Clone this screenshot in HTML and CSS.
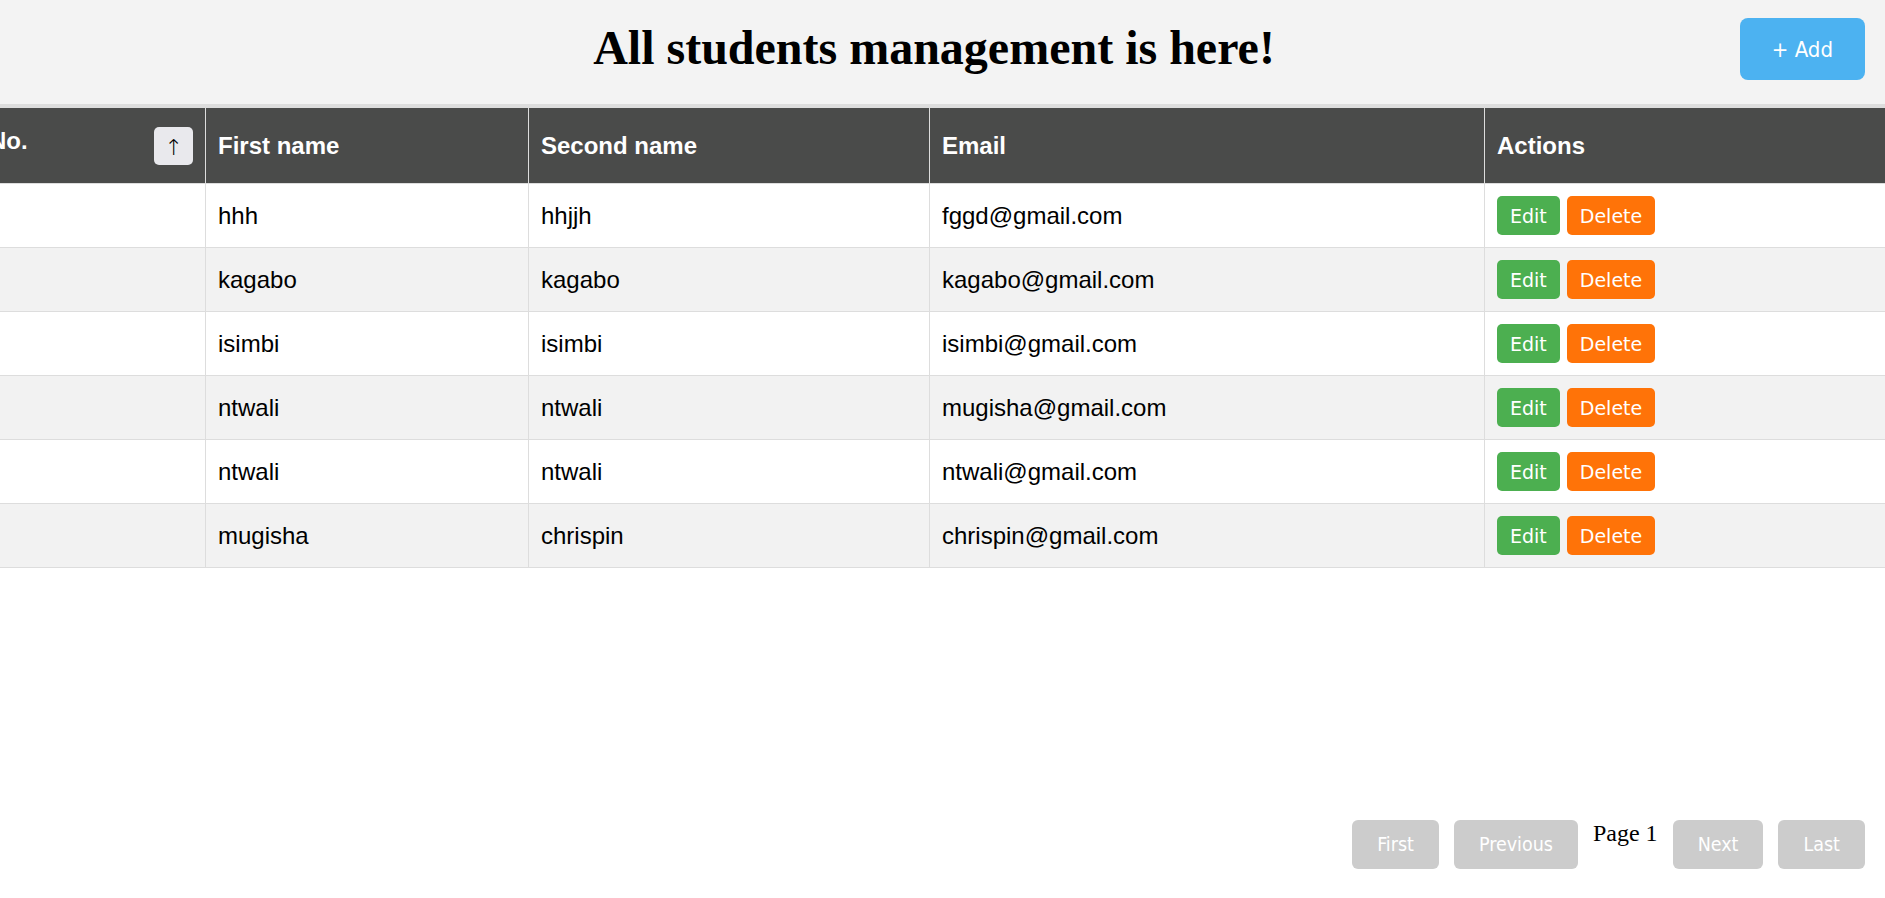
FILE: index.html
```html
<!DOCTYPE html>
<html lang="en">
<head>
<meta charset="utf-8">
<title>Students</title>
<link rel="stylesheet" href="styles.css">
</head>
<body>
<div class="page">
  <header class="topbar">
    <div class="spacer"></div>
    <h1 class="title">All students management is here!</h1>
    <div class="add-wrap"><button class="btn-add">+ Add</button></div>
  </header>

  <div class="table-wrap">
    <table class="students">
      <colgroup>
        <col class="c-no">
        <col class="c-first">
        <col class="c-second">
        <col class="c-email">
        <col class="c-actions">
      </colgroup>
      <thead>
        <tr>
          <th><div class="th-no"><span class="no-label">No.</span><button class="sort">↑</button></div></th>
          <th>First name</th>
          <th>Second name</th>
          <th>Email</th>
          <th>Actions</th>
        </tr>
      </thead>
      <tbody>
        <tr>
          <td></td><td>hhh</td><td>hhjjh</td><td>fggd@gmail.com</td>
          <td><div class="actions"><button class="btn-edit">Edit</button><button class="btn-delete">Delete</button></div></td>
        </tr>
        <tr>
          <td></td><td>kagabo</td><td>kagabo</td><td>kagabo@gmail.com</td>
          <td><div class="actions"><button class="btn-edit">Edit</button><button class="btn-delete">Delete</button></div></td>
        </tr>
        <tr>
          <td></td><td>isimbi</td><td>isimbi</td><td>isimbi@gmail.com</td>
          <td><div class="actions"><button class="btn-edit">Edit</button><button class="btn-delete">Delete</button></div></td>
        </tr>
        <tr>
          <td></td><td>ntwali</td><td>ntwali</td><td>mugisha@gmail.com</td>
          <td><div class="actions"><button class="btn-edit">Edit</button><button class="btn-delete">Delete</button></div></td>
        </tr>
        <tr>
          <td></td><td>ntwali</td><td>ntwali</td><td>ntwali@gmail.com</td>
          <td><div class="actions"><button class="btn-edit">Edit</button><button class="btn-delete">Delete</button></div></td>
        </tr>
        <tr>
          <td></td><td>mugisha</td><td>chrispin</td><td>chrispin@gmail.com</td>
          <td><div class="actions"><button class="btn-edit">Edit</button><button class="btn-delete">Delete</button></div></td>
        </tr>
      </tbody>
    </table>
  </div>

  <nav class="pager">
    <button class="pg-btn">First</button>
    <button class="pg-btn">Previous</button>
    <span class="pg-label">Page 1</span>
    <button class="pg-btn">Next</button>
    <button class="pg-btn">Last</button>
  </nav>
</div>
</body>
</html>
```

FILE: styles.css
```css
html, body {
  margin: 0;
  padding: 0;
  background: #ffffff;
}

.page {
  display: flex;
  flex-direction: column;
  min-height: 100vh;
  overflow: hidden;
}

/* ---------- top bar ---------- */
.topbar {
  height: 107px;
  box-sizing: border-box;
  padding: 0 20px 6px 3px;
  background: #f3f3f3;
  border-bottom: 3px solid #dddddd;
  display: grid;
  grid-template-columns: 1fr auto 1fr;
  align-items: center;
}

.title {
  margin: 0 0 4px;
  font-family: "Liberation Serif", "Times New Roman", serif;
  font-size: 48px;
  font-weight: bold;
  color: #000;
  white-space: nowrap;
}

.add-wrap {
  display: flex;
  justify-content: flex-end;
}

.btn-add {
  height: 62px;
  padding: 0 32px;
  border: none;
  border-radius: 8px;
  background: #4cb2f1;
  color: #ffffff;
  font-family: "DejaVu Sans Condensed", "DejaVu Sans", sans-serif;
  font-size: 22px;
  cursor: pointer;
}

/* ---------- table ---------- */
.table-wrap {
  overflow: hidden;
}

.students {
  margin-left: -24px;
  width: calc(100% + 44px);
  table-layout: fixed;
  border-collapse: collapse;
  font-family: "Liberation Sans", Arial, sans-serif;
  font-size: 24px;
  color: #000;
}

.c-no { width: 229px; }
.c-first { width: 323px; }
.c-second { width: 401px; }
.c-email { width: 555px; }

.students th,
.students td {
  border: 1px solid #dddddd;
  text-align: left;
  vertical-align: middle;
}

.students th {
  height: 76px;
  box-sizing: border-box;
  padding: 0 12px;
  background: #4a4b4a;
  color: #ffffff;
  font-weight: bold;
}

.students td {
  padding: 12px;
  height: 39px;
}

.students tbody tr:nth-child(even) td {
  background: #f2f2f2;
}

.th-no {
  display: flex;
  justify-content: space-between;
  align-items: center;
}

.no-label {
  margin-bottom: 9px;
}

.sort {
  width: 39px;
  height: 38px;
  padding: 5px 0 0;
  border: none;
  border-radius: 5px;
  background: #e9e9ed;
  color: #000000;
  font-family: "DejaVu Sans", sans-serif;
  font-size: 22px;
  font-weight: 200;
  line-height: 30px;
}

.actions {
  display: flex;
  gap: 7px;
}

.btn-edit,
.btn-delete {
  height: 39px;
  padding: 0 13px;
  border: none;
  border-radius: 5px;
  color: #ffffff;
  font-family: "DejaVu Sans", Verdana, sans-serif;
  font-size: 19px;
  cursor: pointer;
}

.btn-edit { background: #4caf50; }
.btn-delete { background: #ff7308; }

/* ---------- pager ---------- */
.pager {
  margin-top: auto;
  display: flex;
  justify-content: flex-end;
  align-items: flex-start;
  gap: 15px;
  padding: 0 20px 29px 0;
}

.pg-btn {
  height: 49px;
  padding: 0 25px;
  border: none;
  border-radius: 6px;
  background: #cccccc;
  color: #ffffff;
  font-family: "DejaVu Sans Condensed", "DejaVu Sans", sans-serif;
  font-size: 19.5px;
}

.pg-label {
  font-family: "Liberation Serif", "Times New Roman", serif;
  font-size: 24px;
  color: #000;
  line-height: 26px;
}
```
